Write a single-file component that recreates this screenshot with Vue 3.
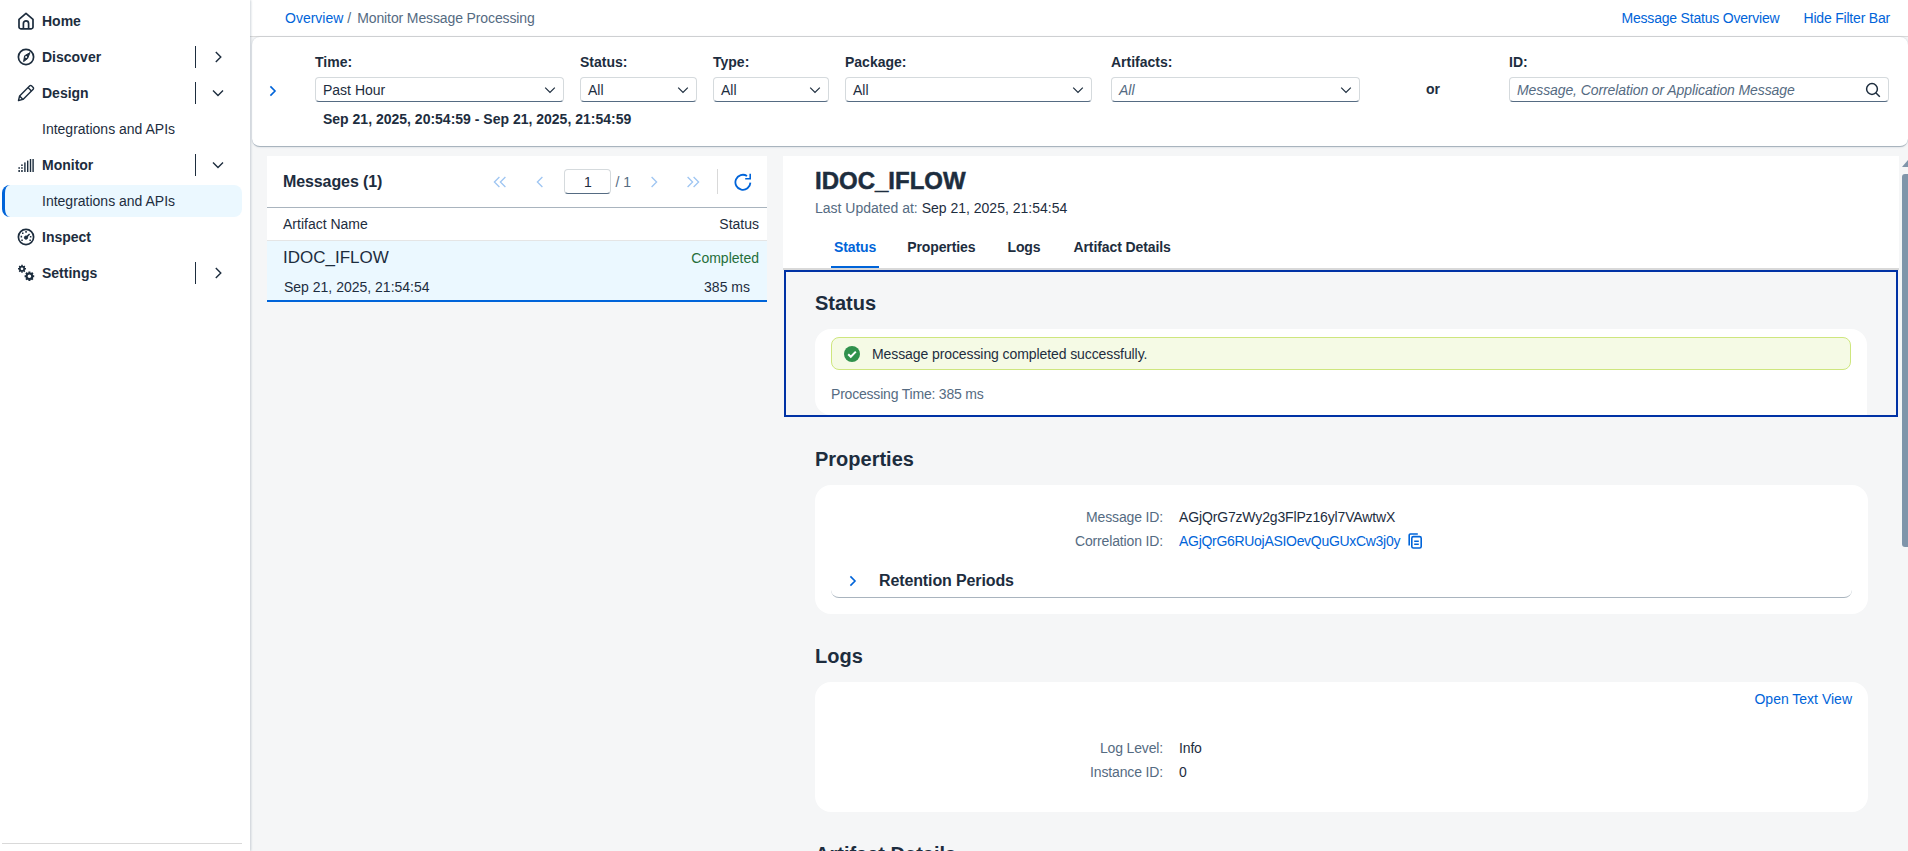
<script setup>
const nav = [
  { label: 'Home', icon: 'home' },
  { label: 'Discover', icon: 'compass', arrow: 'right' },
  { label: 'Design', icon: 'pencil', arrow: 'down' },
  { label: 'Integrations and APIs', sub: true },
  { label: 'Monitor', icon: 'bars', arrow: 'down' },
  { label: 'Integrations and APIs', sub: true, active: true },
  { label: 'Inspect', icon: 'gauge' },
  { label: 'Settings', icon: 'gears', arrow: 'right' },
]

const filters = [
  { label: 'Time:', value: 'Past Hour', cls: 'f-time' },
  { label: 'Status:', value: 'All' },
  { label: 'Type:', value: 'All' },
  { label: 'Package:', value: 'All' },
  { label: 'Artifacts:', value: 'All', italic: true, cls: 'f-artifacts' },
]

const tabs = ['Status', 'Properties', 'Logs', 'Artifact Details']
</script>

<template>
  <div class="app">
    <aside class="side">
      <nav class="nav">
        <div
          v-for="(n, i) in nav"
          :key="i"
          class="nav-item"
          :class="{ sub: n.sub, active: n.active }"
        >
          <span v-if="!n.sub" class="nav-icon">
            <svg v-if="n.icon === 'home'" width="18" height="18" viewBox="0 0 18 18" fill="none" stroke="#1d2d3e" stroke-width="1.7" stroke-linejoin="round">
              <path d="M2 7.4 9 1.4l7 6v7.6a1.8 1.8 0 0 1-1.8 1.8H3.8A1.8 1.8 0 0 1 2 15z" />
              <path d="M6.4 16.6v-5.2a2.6 2.6 0 0 1 5.2 0v5.2" />
            </svg>
            <svg v-else-if="n.icon === 'compass'" width="18" height="18" viewBox="0 0 18 18" fill="none" stroke="#1d2d3e" stroke-width="1.7">
              <circle cx="9" cy="9" r="7.6" />
              <path d="M13 4.6 10.6 10.6 6.6 13.6 7.6 7.8z" fill="#1d2d3e" stroke-width="1" stroke-linejoin="round" />
              <circle cx="9.1" cy="9" r="1" fill="#fff" stroke="none" />
            </svg>
            <svg v-else-if="n.icon === 'pencil'" width="18" height="18" viewBox="0 0 18 18" fill="none" stroke="#1d2d3e" stroke-width="1.4" stroke-linejoin="round">
              <path d="M1.5 16.5 2.6 12 12.8 1.8a1.2 1.2 0 0 1 1.7 0l1.7 1.7a1.2 1.2 0 0 1 0 1.7L6 15.4z" />
              <path d="m11 3.6 3.4 3.4M2.6 12 6 15.4" />
            </svg>
            <svg v-else-if="n.icon === 'bars'" width="18" height="18" viewBox="0 0 18 18" fill="#1d2d3e">
              <rect x="1.4" y="14" width="1.5" height="2" />
              <rect x="1.4" y="11.2" width="1.5" height="1.6" />
              <rect x="4.2" y="14" width="1.5" height="2" />
              <rect x="4.2" y="11.2" width="1.5" height="1.6" />
              <rect x="4.2" y="8.4" width="1.5" height="1.6" />
              <rect x="7.2" y="6.4" width="1.4" height="9.6" />
              <rect x="10" y="4.6" width="1.4" height="11.4" />
              <rect x="12.8" y="3" width="1.4" height="13" />
              <rect x="15.4" y="3" width="1.4" height="13" />
            </svg>
            <svg v-else-if="n.icon === 'gauge'" width="18" height="18" viewBox="0 0 18 18" fill="none" stroke="#1d2d3e">
              <circle cx="9" cy="9" r="7.6" stroke-width="1.7" />
              <circle cx="9" cy="9.6" r="1.6" fill="#1d2d3e" />
              <path d="m9 9.6 3.6-3.6" stroke-width="1.5" />
              <path d="M5 5.2h1.5M8.3 3.9h1.5M3.6 8.6h1.5M4.3 12.2h1.5M12.4 12.2h1.5M12.9 8.8h1.5" stroke-width="1.6" />
            </svg>
            <svg v-else width="18" height="18" viewBox="0 0 18 18" fill="none" stroke="#1d2d3e">
              <circle cx="5" cy="4.8" r="2.2" stroke-width="1.7" />
              <path d="M5 .8v1.6M5 7.2v1.6M1 4.8h1.6M7.4 4.8H9M2.2 2l1.1 1.1M6.7 6.5l1.1 1.1M7.8 2 6.7 3.1M3.3 6.5 2.2 7.6" stroke-width="1.5" />
              <circle cx="12.4" cy="12.2" r="2.8" stroke-width="2" />
              <path d="M12.4 7.4v2M12.4 15v2M7.6 12.2h2M15.2 12.2h2M9 8.8l1.4 1.4M14.4 14.2l1.4 1.4M15.8 8.8l-1.4 1.4M10.4 14.2 9 15.6" stroke-width="2" />
            </svg>
          </span>
          <span class="nav-text">{{ n.label }}</span>
          <span v-if="n.arrow" class="nav-sep"></span>
          <svg v-if="n.arrow === 'right'" class="nav-arrow" width="12" height="12" viewBox="0 0 12 12" fill="none" stroke="#1d2d3e" stroke-width="1.4"><path d="m3.8 1 5 5-5 5" /></svg>
          <svg v-if="n.arrow === 'down'" class="nav-arrow" width="12" height="12" viewBox="0 0 12 12" fill="none" stroke="#1d2d3e" stroke-width="1.4"><path d="m1 3.6 5 5 5-5" /></svg>
        </div>
      </nav>
      <div class="side-foot"></div>
    </aside>

    <main class="main">
      <header class="top">
        <div class="crumbs">
          <a class="link">Overview</a>
          <span class="crumb-sep">/</span>
          <span class="crumb-cur">Monitor Message Processing</span>
        </div>
        <div class="top-links">
          <a class="link">Message Status Overview</a>
          <a class="link">Hide Filter Bar</a>
        </div>
      </header>

      <section class="filter">
        <svg class="filter-toggle" width="12" height="12" viewBox="0 0 12 12" fill="none" stroke="#0064d9" stroke-width="1.6"><path d="m3.4 1.4 4.6 4.6-4.6 4.6" /></svg>
        <div class="filter-grid">
          <div v-for="f in filters" :key="f.label" class="field" :class="f.cls">
            <label>{{ f.label }}</label>
            <div class="select" :class="{ italic: f.italic }">
              <span>{{ f.value }}</span>
              <svg width="12" height="12" viewBox="0 0 12 12" fill="none" stroke="#1d2d3e" stroke-width="1.2"><path d="m1.2 3.6 4.8 4.8 4.8-4.8" /></svg>
            </div>
          </div>
          <div class="or">or</div>
          <div class="field">
            <label>ID:</label>
            <div class="select italic search">
              <span>Message, Correlation or Application Message</span>
              <svg width="16" height="16" viewBox="0 0 16 16" fill="none" stroke="#1d2d3e" stroke-width="1.5"><circle cx="7" cy="7" r="5.4" /><path d="m10.8 10.8 4 4" /></svg>
            </div>
          </div>
          <div class="range">Sep 21, 2025, 20:54:59 - Sep 21, 2025, 21:54:59</div>
        </div>
      </section>

      <div class="body">
        <section class="master">
          <div class="m-head">
            <h2>Messages (1)</h2>
            <div class="pager">
              <svg width="16" height="12" viewBox="0 0 16 12" fill="none" stroke="#9ec5f2" stroke-width="1.3"><path d="M7.4 1 2.4 6l5 5M13.4 1l-5 5 5 5" /></svg>
              <svg class="p-one" width="12" height="12" viewBox="0 0 12 12" fill="none" stroke="#9ec5f2" stroke-width="1.3"><path d="M8.4 1 3.4 6l5 5" /></svg>
              <div class="p-input">1</div>
              <span class="p-total">/ 1</span>
              <svg class="p-next" width="12" height="12" viewBox="0 0 12 12" fill="none" stroke="#9ec5f2" stroke-width="1.3"><path d="m3.6 1 5 5-5 5" /></svg>
              <svg class="p-last" width="16" height="12" viewBox="0 0 16 12" fill="none" stroke="#9ec5f2" stroke-width="1.3"><path d="m2.6 1 5 5-5 5M8.6 1l5 5-5 5" /></svg>
              <span class="p-sep"></span>
              <svg class="p-refresh" width="18" height="18" viewBox="0 0 18 18" fill="none" stroke="#0064d9" stroke-width="1.8"><path d="M16.4 9.6A7.5 7.5 0 1 1 13 3" /><path d="M16.2 .8v5h-5" stroke-width="1.6" /></svg>
            </div>
          </div>
          <div class="m-cols"><span>Artifact Name</span><span>Status</span></div>
          <div class="m-row">
            <div class="m-line"><span class="m-name">IDOC_IFLOW</span><span class="m-ok">Completed</span></div>
            <div class="m-line m-second"><span>Sep 21, 2025, 21:54:54</span><span class="m-ms">385 ms</span></div>
          </div>
        </section>

        <section class="detail">
          <div class="d-head">
            <h1>IDOC_IFLOW</h1>
            <p class="updated"><span>Last Updated at:</span> Sep 21, 2025, 21:54:54</p>
            <div class="tabs">
              <span v-for="(t, i) in tabs" :key="t" class="tab" :class="{ on: i === 0 }">{{ t }}</span>
            </div>
          </div>

          <div class="sec sec-focus">
            <h3>Status</h3>
            <div class="card card-status">
              <div class="strip">
                <svg width="16" height="16" viewBox="0 0 16 16"><circle cx="8" cy="8" r="8" fill="#30914c" /><path d="m4.2 8.2 2.6 2.6 5-5.2" fill="none" stroke="#fff" stroke-width="2" /></svg>
                <span>Message processing completed successfully.</span>
              </div>
              <div class="proc">Processing Time: 385 ms</div>
            </div>
          </div>

          <div class="sec">
            <h3>Properties</h3>
            <div class="card card-props">
              <div class="kv"><span class="k">Message ID:</span><span class="v">AGjQrG7zWy2g3FlPz16yl7VAwtwX</span></div>
              <div class="kv">
                <span class="k">Correlation ID:</span>
                <a class="v link corr">AGjQrG6RUojASIOevQuGUxCw3j0y</a>
                <svg class="copy" width="16" height="16" viewBox="0 0 16 16" fill="none" stroke="#0064d9" stroke-width="1.6"><path d="M2.2 12.4V2.2A1.2 1.2 0 0 1 3.4 1h7.4" /><rect x="4.8" y="3.6" width="9.4" height="11.4" rx="1.6" /><path d="M7.2 8.2h4.6M7.2 11.2h4.6" /></svg>
              </div>
              <div class="retention">
                <svg width="12" height="12" viewBox="0 0 12 12" fill="none" stroke="#0064d9" stroke-width="1.6"><path d="m3.4 1.4 4.6 4.6-4.6 4.6" /></svg>
                <span>Retention Periods</span>
              </div>
            </div>
          </div>

          <div class="sec">
            <h3>Logs</h3>
            <div class="card card-logs">
              <div class="log-top"><a class="link">Open Text View</a></div>
              <div class="kv"><span class="k">Log Level:</span><span class="v">Info</span></div>
              <div class="kv"><span class="k">Instance ID:</span><span class="v">0</span></div>
            </div>
          </div>

          <div class="sec">
            <h3>Artifact Details</h3>
          </div>
        </section>

        <div class="scroll">
          <span class="s-up"></span>
          <span class="s-thumb"></span>
        </div>
      </div>
    </main>
  </div>
</template>

<style>
html, body { margin: 0; overflow: hidden; }
</style>

<style scoped>
.app {
  display: flex;
  height: 851px;
  overflow: hidden;
  font-family: "Liberation Sans", Arial, sans-serif;
  font-size: 14px;
  color: #1d2d3e;
  background: #f5f6f7;
}
a.link, .link { color: #0064d9; text-decoration: none; }

/* ---- side nav ---- */
.side {
  width: 250px;
  flex: none;
  background: #fff;
  display: flex;
  flex-direction: column;
  box-shadow: 1px 0 2px rgba(85, 107, 130, .28);
  position: relative;
  z-index: 2;
}
.nav { flex: 1; padding-top: 3px; }
.nav-item {
  height: 36px;
  display: flex;
  align-items: center;
  padding-left: 17px;
  font-weight: 700;
}
.nav-icon { width: 25px; height: 18px; flex: none; }
.nav-icon svg { display: block; }
.nav-text { flex: 1; }
.nav-sep { width: 1px; height: 22px; background: #1d2d3e; margin-right: 16px; }
.nav-arrow { margin-right: 26px; }
.nav-item.sub { font-weight: 400; padding-left: 42px; }
.nav-item.active {
  height: 32px;
  margin: 2px 8px 2px 2px;
  padding-left: 37px;
  background: #ebf8ff;
  border-left: 3px solid #0064d9;
  border-radius: 8px;
}
.side-foot { height: 1px; margin: 0 8px 7px 2px; background: #d9d9d9; }

/* ---- top bar ---- */
.main { flex: 1; min-width: 0; display: flex; flex-direction: column; }
.top {
  height: 36px;
  flex: none;
  background: #fff;
  display: flex;
  align-items: center;
  justify-content: space-between;
  padding: 0 18px 0 35px;
  border-bottom: 1px solid #d9d9d9;
  box-sizing: content-box;
}
.crumbs { display: flex; }
.crumb-sep { margin: 0 6px 0 4px; color: #556b82; }
.crumb-cur { color: #556b82; letter-spacing: -.12px; }
.top-links { display: flex; gap: 24px; letter-spacing: -.2px; }

/* ---- filter ---- */
.filter {
  height: 110px;
  flex: none;
  box-sizing: border-box;
  margin-left: 2px;
  background: #fff;
  border-bottom: 1px solid #a9b4be;
  border-radius: 8px;
  box-shadow: 0 0 2px rgba(85, 107, 130, .3);
  display: flex;
  padding: 15px 19px 0 15px;
}
.filter-toggle { margin: 33px 0 0 0; flex: none; }
.filter-grid {
  margin-left: 36px;
  display: grid;
  grid-template-columns: 249px 117px 116px 247px 249px 120px 380px;
  column-gap: 16px;
  align-content: start;
}
.field label { display: block; font-weight: 700; height: 20px; line-height: 20px; margin-bottom: 5px; }
.f-artifacts { margin-left: 3px; margin-right: -3px; }
.select {
  height: 25px;
  box-sizing: border-box;
  display: flex;
  align-items: center;
  justify-content: space-between;
  padding: 0 7px;
  background: #fff;
  border: 1px solid #d5dadd;
  border-bottom-color: #556b82;
  border-radius: 4px;
}
.select.italic { font-style: italic; color: #556b82; }
.select.search { letter-spacing: -.1px; }
.or { font-weight: 700; text-align: center; margin-top: 25px; line-height: 25px; }
.range { grid-column: 1 / 5; font-weight: 700; margin: 7px 0 0 8px; line-height: 20px; }

/* ---- body ---- */
.body {
  flex: 1;
  min-height: 0;
  display: flex;
  align-items: flex-start;
  padding: 9px 0 0 17px;
}
.master { width: 500px; flex: none; }
.m-head {
  height: 51px;
  background: #fff;
  border-bottom: 1px solid #a9b4be;
  display: flex;
  align-items: center;
  justify-content: space-between;
  padding: 0 0 0 16px;
}
.m-head h2 { margin: 0; font-size: 16px; font-weight: 700; letter-spacing: -.1px; }
.pager { display: flex; align-items: center; margin-right: 15px; }
.p-one { margin-left: 26px; }
.p-input {
  width: 47px;
  height: 25px;
  box-sizing: border-box;
  margin-left: 18px;
  text-align: center;
  line-height: 24px;
  border: 1px solid #d5dadd;
  border-bottom-color: #556b82;
  border-radius: 4px;
}
.p-total { margin-left: 4px; color: #556b82; }
.p-next { margin-left: 17px; }
.p-last { margin-left: 25px; }
.p-sep { width: 1px; height: 25px; background: #d9d9d9; margin-left: 16px; }
.p-refresh { margin-left: 16px; }
.m-cols {
  height: 32px;
  background: #fff;
  border-bottom: 1px solid #e5e5e5;
  display: flex;
  align-items: center;
  justify-content: space-between;
  padding: 0 8px 0 16px;
}
.m-row {
  height: 59px;
  box-sizing: content-box;
  background: #ebf8ff;
  border-bottom: 2px solid #0064d9;
  padding: 0 8px 0 16px;
}
.m-line { display: flex; justify-content: space-between; align-items: center; }
.m-line:first-child { height: 32px; padding-top: 1px; box-sizing: border-box; }
.m-name { font-size: 17px; }
.m-ok { color: #256f3a; }
.m-second { height: 27px; padding: 0 9px 0 1px; }

/* ---- detail ---- */
.detail { width: 1116px; flex: none; margin-left: 16px; }
.d-head { background: #fff; height: 114px; padding-left: 32px; box-sizing: border-box; border-bottom: 2px solid #d9d9d9; }
.d-head h1 { margin: 0; padding-top: 11px; font-size: 24px; line-height: 28px; font-weight: 700; color: #1d2d3e; -webkit-text-stroke: .5px #1d2d3e; }
.updated { margin: 3px 0 0; line-height: 20px; }
.updated span { color: #556b82; }
.tabs { display: flex; margin: 12px 0 0 16px; letter-spacing: -.1px; }
.tab { font-weight: 700; padding: 0 3px; height: 38px; line-height: 34px; margin-right: 27px; box-sizing: border-box; }
.tab:nth-child(2) { margin-right: 26px; }
.tab:nth-child(3) { margin-right: 27px; }
.tab.on { color: #0064d9; border-bottom: 2px solid #0064d9; margin-right: 25px; }

.sec { padding: 30px 31px 0 32px; }
.sec-focus {
  height: 147px;
  box-sizing: border-box;
  margin: 0 1px;
  padding: 19px 29px 0 29px;
  border: 2px solid #0032a5;
}
h3 { margin: 0 0 14px; font-size: 20px; line-height: 24px; font-weight: 700; }
.card { background: #fff; border-radius: 16px; }
.card-status { height: 86px; padding: 8px 16px 0; box-sizing: border-box; border-radius: 16px 16px 0 16px; }
.strip {
  height: 33px;
  box-sizing: border-box;
  display: flex;
  align-items: center;
  gap: 12px;
  padding-left: 12px;
  background: #f5fae5;
  border: 1px solid #cee67e;
  border-radius: 8px;
  letter-spacing: -.09px;
}
.proc { margin-top: 16px; color: #556b82; letter-spacing: -.2px; }
.card-props { height: 129px; padding: 20px 16px 0; box-sizing: border-box; position: relative; }
.kv { display: flex; align-items: center; height: 24px; }
.k { width: 332px; text-align: right; color: #556b82; margin-right: 16px; flex: none; letter-spacing: -.15px; }
.v { letter-spacing: -.15px; }
.v.corr { letter-spacing: -.3px; }
.copy { margin-left: 7px; }
.retention {
  margin-top: 11px;
  height: 33px;
  display: flex;
  align-items: center;
  gap: 20px;
  padding-left: 16px;
  border-bottom: 1px solid #a9b4be;
  border-radius: 0 0 8px 8px;
  font-size: 16px;
  font-weight: 700;
  letter-spacing: -.12px;
}
.card-logs { height: 130px; padding: 5px 16px 0; box-sizing: border-box; }
.log-top { text-align: right; height: 49px; line-height: 24px; }

.scroll { flex: none; margin-left: 3px; width: 6px; display: flex; flex-direction: column; align-items: stretch; }
.s-up { height: 0; border-left: 6px solid transparent; border-bottom: 7px solid #7f95aa; margin-top: 4px; }
.s-thumb { height: 373px; margin-top: 7px; background: #7f95aa; border-radius: 3px 0 0 3px; }
</style>
